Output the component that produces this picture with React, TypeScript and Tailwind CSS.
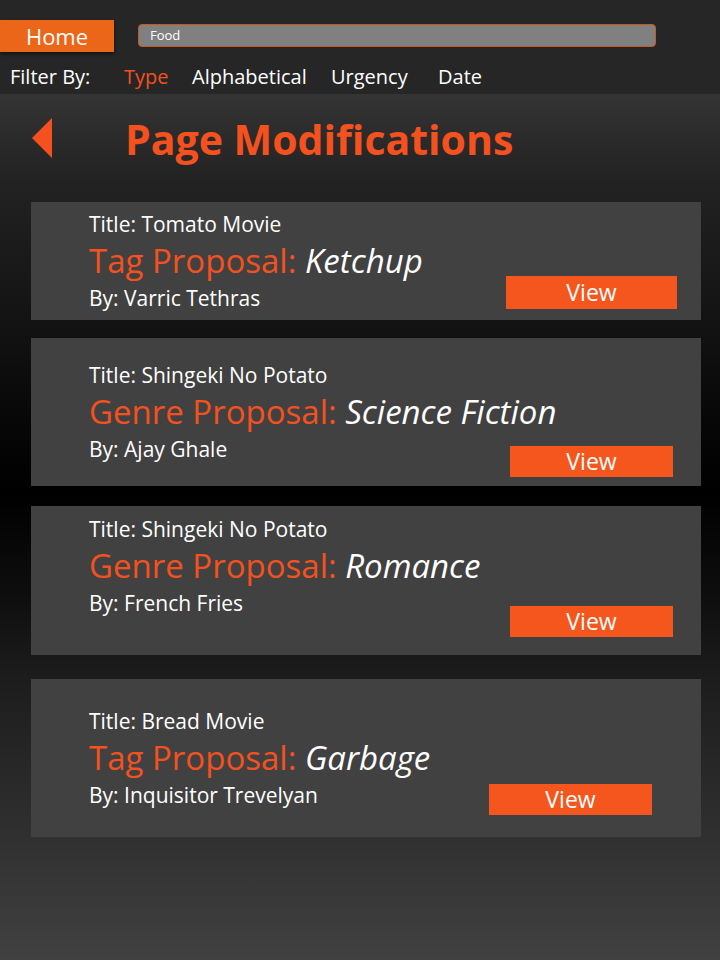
import React from "react";

type Card = {
  title: string;
  label: string;
  value: string;
  by: string;
  cls: string;
  pt: string;
  btn: string;
};

const cards: Card[] = [
  {
    title: "Title: Tomato Movie",
    label: "Tag Proposal:",
    value: "Ketchup",
    by: "By: Varric Tethras",
    cls: "h-[118px]",
    pt: "pt-[11px]",
    btn: "w-[171px] h-[33px] mr-[24px] mb-[11px]",
  },
  {
    title: "Title: Shingeki No Potato",
    label: "Genre Proposal:",
    value: "Science Fiction",
    by: "By: Ajay Ghale",
    cls: "h-[148px] mt-[18px]",
    pt: "pt-[26px]",
    btn: "w-[163px] h-[31px] mr-[28px] mb-[9px]",
  },
  {
    title: "Title: Shingeki No Potato",
    label: "Genre Proposal:",
    value: "Romance",
    by: "By: French Fries",
    cls: "h-[149px] mt-[20px]",
    pt: "pt-[12px]",
    btn: "w-[163px] h-[31px] mr-[28px] mb-[18px]",
  },
  {
    title: "Title: Bread Movie",
    label: "Tag Proposal:",
    value: "Garbage",
    by: "By: Inquisitor Trevelyan",
    cls: "h-[158px] mt-[24px]",
    pt: "pt-[31px]",
    btn: "w-[163px] h-[31px] mr-[49px] mb-[22px]",
  },
];

export default function App() {
  return (
    <div className="w-[720px] h-[960px] overflow-hidden font-['Open_Sans',sans-serif] text-white">
      <div className="h-[94px] bg-[#262626] pt-[20px]">
        <div className="flex">
          <div className="w-[114px] h-[32px] bg-[#ec6619] shadow-[0_2px_3px_rgba(0,0,0,0.5)] flex items-center justify-center text-[22px] leading-none">
            Home
          </div>
          <div className="ml-[24px] mt-[4px] w-[518px] h-[23px] rounded-[4px] border border-[#c55a1c] bg-[#808080] flex items-center pl-[11px] text-[13px] leading-none">
            Food
          </div>
        </div>
        <div className="flex mt-[13px] text-[20px] leading-[24px]">
          <span className="pl-[10px] w-[124px]">Filter By:</span>
          <span className="w-[68px] text-[#f0521e]">Type</span>
          <span className="w-[139px]">Alphabetical</span>
          <span className="w-[107px]">Urgency</span>
          <span>Date</span>
        </div>
      </div>
      <div className="h-[866px] pt-[24px] bg-[linear-gradient(to_bottom,#343434_0%,#222222_10%,#141414_25%,#070707_38%,#000000_46%,#0e0e0e_58%,#1c1c1c_67%,#2e2e2e_84%,#414141_100%)]">
        <div className="flex items-start h-[40px]">
          <svg className="ml-[32px] shrink-0" width="21" height="40" viewBox="0 0 21 40">
            <polygon points="0,20 20,0 20,40" fill="#f4511e" />
          </svg>
          <div className="ml-[72px] mt-[1px] text-[41px] leading-[40px] font-bold text-[#f4511e] whitespace-nowrap">
            Page Modifications
          </div>
        </div>
        <div className="mt-[44px] pl-[31px] pr-[19px]">
          {cards.map((c, i) => (
            <div key={i} className={`bg-[#414141] flex ${c.cls}`}>
              <div className={`flex-1 min-w-0 pl-[58px] ${c.pt}`}>
                <div className="text-[21px] leading-[22px] whitespace-nowrap">{c.title}</div>
                <div className="mt-[8px] text-[33px] leading-[36px] whitespace-nowrap">
                  <span className="text-[#f4511e]">{c.label}</span>{" "}
                  <span className="italic">{c.value}</span>
                </div>
                <div className="mt-[8px] text-[21px] leading-[22px] whitespace-nowrap">{c.by}</div>
              </div>
              <div
                className={`self-end shrink-0 bg-[#f5561d] flex items-center justify-center text-[23px] leading-none ${c.btn}`}
              >
                View
              </div>
            </div>
          ))}
        </div>
      </div>
    </div>
  );
}
